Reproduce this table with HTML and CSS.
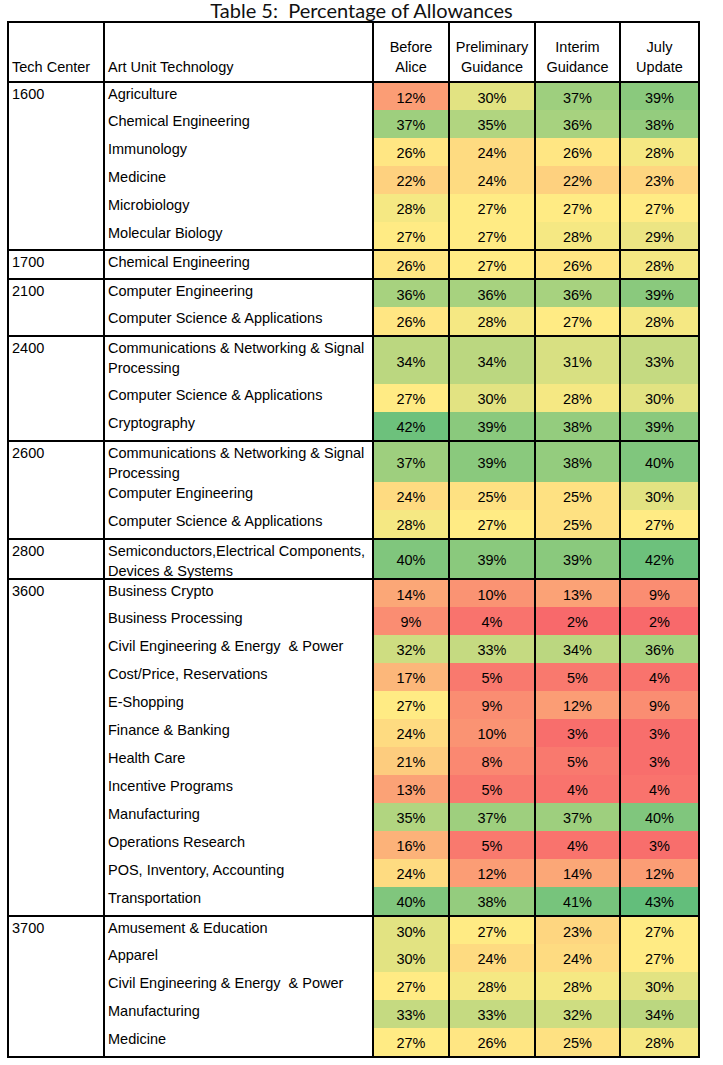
FILE: index.html
```html
<!DOCTYPE html>
<html>
<head>
<meta charset="utf-8">
<title>Table 5: Percentage of Allowances</title>
<link rel="stylesheet" href="styles.css">
</head>
<body>
<div class="title">Table 5:&nbsp; Percentage of Allowances</div>
<table class="grid">
  <colgroup>
    <col class="c-tc"><col class="c-au"><col class="c-ba"><col class="c-pg"><col class="c-ig"><col class="c-ju">
  </colgroup>
  <thead>
    <tr class="hd">
      <th class="l">Tech Center</th>
      <th class="l">Art Unit Technology</th>
      <th>Before<br>Alice</th>
      <th>Preliminary<br>Guidance</th>
      <th>Interim<br>Guidance</th>
      <th>July<br>Update</th>
    </tr>
  </thead>
  <tbody>
    <tr class="r28"><td class="t" rowspan="6">1600</td><td class="t">Agriculture</td><td class="p v12">12%</td><td class="p v30">30%</td><td class="p v37">37%</td><td class="p v39">39%</td></tr>
    <tr class="r28"><td class="t">Chemical Engineering</td><td class="p v37">37%</td><td class="p v35">35%</td><td class="p v36">36%</td><td class="p v38">38%</td></tr>
    <tr class="r28"><td class="t">Immunology</td><td class="p v26">26%</td><td class="p v24">24%</td><td class="p v26">26%</td><td class="p v28">28%</td></tr>
    <tr class="r28"><td class="t">Medicine</td><td class="p v22">22%</td><td class="p v24">24%</td><td class="p v22">22%</td><td class="p v23">23%</td></tr>
    <tr class="r28"><td class="t">Microbiology</td><td class="p v28">28%</td><td class="p v27">27%</td><td class="p v27">27%</td><td class="p v27">27%</td></tr>
    <tr class="r28"><td class="t">Molecular Biology</td><td class="p v27">27%</td><td class="p v27">27%</td><td class="p v28">28%</td><td class="p v29">29%</td></tr>
  </tbody>
  <tbody>
    <tr class="r29"><td class="t">1700</td><td class="t">Chemical Engineering</td><td class="p v26">26%</td><td class="p v27">27%</td><td class="p v26">26%</td><td class="p v28">28%</td></tr>
  </tbody>
  <tbody>
    <tr class="r28"><td class="t" rowspan="2">2100</td><td class="t">Computer Engineering</td><td class="p v36">36%</td><td class="p v36">36%</td><td class="p v36">36%</td><td class="p v39">39%</td></tr>
    <tr class="r29"><td class="t">Computer Science &amp; Applications</td><td class="p v26">26%</td><td class="p v28">28%</td><td class="p v27">27%</td><td class="p v28">28%</td></tr>
  </tbody>
  <tbody>
    <tr class="r48"><td class="t" rowspan="3">2400</td><td class="t">Communications &amp; Networking &amp; Signal<br>Processing</td><td class="p v34">34%</td><td class="p v34">34%</td><td class="p v31">31%</td><td class="p v33">33%</td></tr>
    <tr class="r28"><td class="t">Computer Science &amp; Applications</td><td class="p v27">27%</td><td class="p v30">30%</td><td class="p v28">28%</td><td class="p v30">30%</td></tr>
    <tr class="r29"><td class="t">Cryptography</td><td class="p v42">42%</td><td class="p v39">39%</td><td class="p v38">38%</td><td class="p v39">39%</td></tr>
  </tbody>
  <tbody>
    <tr class="r41"><td class="t" rowspan="3">2600</td><td class="t"><div class="wrap2">Communications &amp; Networking &amp; Signal<br>Processing</div></td><td class="p v37">37%</td><td class="p v39">39%</td><td class="p v38">38%</td><td class="p v40">40%</td></tr>
    <tr class="r28"><td class="t">Computer Engineering</td><td class="p v24">24%</td><td class="p v25">25%</td><td class="p v25">25%</td><td class="p v30">30%</td></tr>
    <tr class="r29"><td class="t">Computer Science &amp; Applications</td><td class="p v28">28%</td><td class="p v27">27%</td><td class="p v25">25%</td><td class="p v27">27%</td></tr>
  </tbody>
  <tbody>
    <tr class="r40"><td class="t">2800</td><td class="t"><div class="wrap2">Semiconductors,Electrical Components,<br>Devices &amp; Systems</div></td><td class="p v40">40%</td><td class="p v39">39%</td><td class="p v39">39%</td><td class="p v42">42%</td></tr>
  </tbody>
  <tbody>
    <tr class="r28"><td class="t" rowspan="12">3600</td><td class="t">Business Crypto</td><td class="p v14">14%</td><td class="p v10">10%</td><td class="p v13">13%</td><td class="p v9">9%</td></tr>
    <tr class="r28"><td class="t">Business Processing</td><td class="p v9">9%</td><td class="p v4">4%</td><td class="p v2">2%</td><td class="p v2">2%</td></tr>
    <tr class="r28"><td class="t">Civil Engineering &amp; Energy&nbsp; &amp; Power</td><td class="p v32">32%</td><td class="p v33">33%</td><td class="p v34">34%</td><td class="p v36">36%</td></tr>
    <tr class="r28"><td class="t">Cost/Price, Reservations</td><td class="p v17">17%</td><td class="p v5">5%</td><td class="p v5">5%</td><td class="p v4">4%</td></tr>
    <tr class="r28"><td class="t">E-Shopping</td><td class="p v27">27%</td><td class="p v9">9%</td><td class="p v12">12%</td><td class="p v9">9%</td></tr>
    <tr class="r28"><td class="t">Finance &amp; Banking</td><td class="p v24">24%</td><td class="p v10">10%</td><td class="p v3">3%</td><td class="p v3">3%</td></tr>
    <tr class="r28"><td class="t">Health Care</td><td class="p v21">21%</td><td class="p v8">8%</td><td class="p v5">5%</td><td class="p v3">3%</td></tr>
    <tr class="r28"><td class="t">Incentive Programs</td><td class="p v13">13%</td><td class="p v5">5%</td><td class="p v4">4%</td><td class="p v4">4%</td></tr>
    <tr class="r28"><td class="t">Manufacturing</td><td class="p v35">35%</td><td class="p v37">37%</td><td class="p v37">37%</td><td class="p v40">40%</td></tr>
    <tr class="r28"><td class="t">Operations Research</td><td class="p v16">16%</td><td class="p v5">5%</td><td class="p v4">4%</td><td class="p v3">3%</td></tr>
    <tr class="r28"><td class="t">POS, Inventory, Accounting</td><td class="p v24">24%</td><td class="p v12">12%</td><td class="p v14">14%</td><td class="p v12">12%</td></tr>
    <tr class="r29"><td class="t">Transportation</td><td class="p v40">40%</td><td class="p v38">38%</td><td class="p v41">41%</td><td class="p v43">43%</td></tr>
  </tbody>
  <tbody>
    <tr class="r28"><td class="t" rowspan="5">3700</td><td class="t">Amusement &amp; Education</td><td class="p v30">30%</td><td class="p v27">27%</td><td class="p v23">23%</td><td class="p v27">27%</td></tr>
    <tr class="r28"><td class="t">Apparel</td><td class="p v30">30%</td><td class="p v24">24%</td><td class="p v24">24%</td><td class="p v27">27%</td></tr>
    <tr class="r28"><td class="t">Civil Engineering &amp; Energy&nbsp; &amp; Power</td><td class="p v27">27%</td><td class="p v28">28%</td><td class="p v28">28%</td><td class="p v30">30%</td></tr>
    <tr class="r28"><td class="t">Manufacturing</td><td class="p v33">33%</td><td class="p v33">33%</td><td class="p v32">32%</td><td class="p v34">34%</td></tr>
    <tr class="r29"><td class="t">Medicine</td><td class="p v27">27%</td><td class="p v26">26%</td><td class="p v25">25%</td><td class="p v28">28%</td></tr>
  </tbody>
</table>
</body>
</html>
```
FILE: styles.css
```css
html, body {
  margin: 0;
  padding: 0;
  background: #ffffff;
}

body {
  width: 723px;
  color: #000;
  font-family: "Liberation Sans", Arial, sans-serif;
  font-size: 14.5px;
}

.title {
  height: 21px;
  line-height: 20px;
  text-align: center;
  font-family: Lato, "Open Sans", sans-serif;
  font-size: 20px;
  color: #111;
  white-space: pre;
}

.grid {
  margin-left: 7px;
  border-collapse: collapse;
  table-layout: fixed;
  width: 691px;
  border: 2px solid #000;
}

.c-tc { width: 96px; }
.c-au { width: 269px; }
.c-ba { width: 76px; }
.c-pg { width: 86px; }
.c-ig { width: 85px; }
.c-ju { width: 79px; }

.grid th,
.grid td {
  border-left: 2px solid #000;
  border-right: 2px solid #000;
  padding: 0;
  line-height: 20px;
  white-space: nowrap;
}

.grid thead {
  border-bottom: 2px solid #000;
}

.grid tbody {
  border-top: 2px solid #000;
}

.hd {
  height: 60px;
}

.grid th {
  font-weight: normal;
  vertical-align: bottom;
  text-align: center;
  padding-bottom: 4px;
}

.grid th.l {
  text-align: left;
  padding-left: 3px;
}

.grid td.t {
  vertical-align: top;
  padding-top: 1px;
  padding-left: 3px;
  text-align: left;
}

.wrap2 {
  margin-bottom: -6px;
}

.grid td.p {
  vertical-align: middle;
  text-align: center;
  padding-top: 2px;
}

.r28 { height: 28px; }
.r29 { height: 29px; }
.r40 { height: 40px; }
.r41 { height: 41px; }
.r48 { height: 48px; }

/* three-colour scale: red (2%) - yellow (27%) - green (43%) */
.v2  { background: #F8696B; }
.v3  { background: #F86E6C; }
.v4  { background: #F9736D; }
.v5  { background: #F9796E; }
.v8  { background: #FA8871; }
.v9  { background: #FA8D72; }
.v10 { background: #FA9373; }
.v12 { background: #FB9D75; }
.v13 { background: #FBA276; }
.v14 { background: #FBA777; }
.v16 { background: #FCB279; }
.v17 { background: #FCB77A; }
.v21 { background: #FDCC7E; }
.v22 { background: #FED17F; }
.v23 { background: #FED680; }
.v24 { background: #FEDB81; }
.v25 { background: #FEE182; }
.v26 { background: #FFE683; }
.v27 { background: #FFEB84; }
.v28 { background: #F5E883; }
.v29 { background: #ECE583; }
.v30 { background: #E2E382; }
.v31 { background: #D8E082; }
.v32 { background: #CEDD81; }
.v33 { background: #C5DA81; }
.v34 { background: #BBD780; }
.v35 { background: #B1D580; }
.v36 { background: #A7D27F; }
.v37 { background: #9ECF7E; }
.v38 { background: #94CC7E; }
.v39 { background: #8AC97D; }
.v40 { background: #80C67D; }
.v41 { background: #77C47C; }
.v42 { background: #6DC17C; }
.v43 { background: #63BE7B; }
```
